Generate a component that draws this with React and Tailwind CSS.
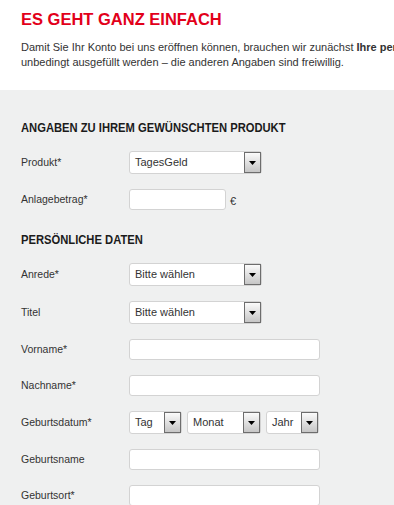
import React from 'react';

const labelCls = 'w-[108px] shrink-0 text-[10.5px] text-[#333]';

const Arrow = () => (
  <div className="flex h-full w-[17px] shrink-0 items-center justify-center border border-[#6d6d6d] bg-gradient-to-b from-[#fbfbfb] to-[#c6c6c6]">
    <svg width="7" height="4" viewBox="0 0 7 4">
      <path d="M0 0h7L3.5 4z" fill="#000" />
    </svg>
  </div>
);

const Select = ({ value, width }) => (
  <div className={`flex h-[23px] items-stretch rounded-[3px] border border-[#d3d3d3] bg-white ${width}`}>
    <span className="flex flex-1 items-center truncate pl-[5px] text-[11px] text-[#333]">{value}</span>
    <Arrow />
  </div>
);

const Input = ({ width = 'w-[191px]' }) => (
  <div className={`h-[21px] rounded-[3px] border border-[#d3d3d3] bg-white ${width}`}></div>
);

const Row = ({ label, children }) => (
  <div className="flex items-center">
    <div className={labelCls}>{label}</div>
    {children}
  </div>
);

// no narrow font available, so squeeze the bold sans horizontally
const Heading = ({ children }) => (
  <h3 className="h-[16px] whitespace-nowrap text-[13.5px] leading-[16px] font-bold text-[#1b1b1b]">
    <span className="inline-block origin-left scale-x-[0.83]">{children}</span>
  </h3>
);

export default function App() {
  return (
    <div
      className="h-[505px] w-[394px] overflow-hidden bg-white"
      style={{ fontFamily: "'Liberation Sans', Arial, sans-serif" }}
    >
      {/* intro */}
      <div className="h-[90px] pl-[21px] pt-[9px]">
        <h1 className="text-[16.5px] leading-[20px] font-bold text-[#e2001a]">ES GEHT GANZ EINFACH</h1>
        <p className="mt-[11px] whitespace-nowrap text-[11px] leading-[15px] text-[#333]">
          Damit Sie Ihr Konto bei uns eröffnen können, brauchen wir zunächst <b>Ihre persönlichen Daten</b>. Die mit * gekennzeichneten Felder müssen
          <br />
          unbedingt ausgefüllt werden – die anderen Angaben sind freiwillig.
        </p>
      </div>

      {/* form */}
      <div className="h-full bg-[#eff0f0] pl-[21px] pt-[30px]">
        <Heading>ANGABEN ZU IHREM GEWÜNSCHTEN PRODUKT</Heading>
        <div className="mt-[15px] flex flex-col gap-[15px]">
          <Row label="Produkt*">
            <Select value="TagesGeld" width="w-[133px]" />
          </Row>
          <Row label="Anlagebetrag*">
            <Input width="w-[97px]" />
            <span className="ml-[4px] mt-[3px] text-[11px] text-[#333]">€</span>
          </Row>
        </div>

        <div className="mt-[22px]">
          <Heading>PERSÖNLICHE DATEN</Heading>
        </div>
        <div className="mt-[15px] flex flex-col gap-[15px]">
          <Row label="Anrede*">
            <Select value="Bitte wählen" width="w-[133px]" />
          </Row>
          <Row label="Titel">
            <Select value="Bitte wählen" width="w-[133px]" />
          </Row>
          <Row label="Vorname*">
            <Input />
          </Row>
          <Row label="Nachname*">
            <Input />
          </Row>
          <Row label="Geburtsdatum*">
            <div className="flex gap-[5px]">
              <Select value="Tag" width="w-[53px]" />
              <Select value="Monat" width="w-[74px]" />
              <Select value="Jahr" width="w-[53px]" />
            </div>
          </Row>
          <Row label="Geburtsname">
            <Input />
          </Row>
          <Row label="Geburtsort*">
            <Input />
          </Row>
        </div>
      </div>
    </div>
  );
}
